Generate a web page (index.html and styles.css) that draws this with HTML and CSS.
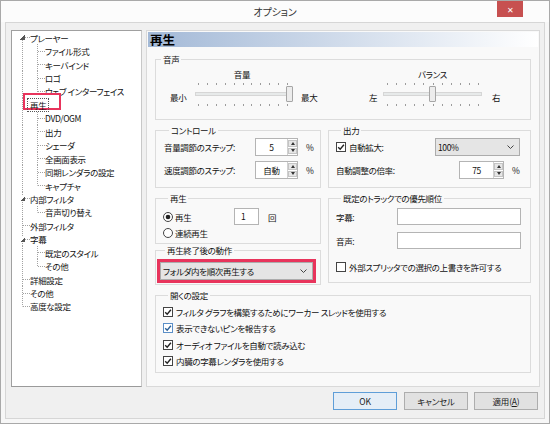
FILE: index.html
```html
<!DOCTYPE html>
<html lang="ja">
<head>
<meta charset="utf-8">
<title>オプション</title>
<link rel="stylesheet" href="styles.css">
</head>
<body>
<div class="window">
  <div class="titlebar">
    <span class="title">オプション</span>
    <span class="close">✕</span>
  </div>
  <div class="client">
    <div class="main">
      <div class="tree">
        <div class="row"><span class="c first exp"><i class="tri"></i></span><span class="txt">プレーヤー</span></div>
        <div class="row"><span class="c p"></span><span class="c tee"></span><span class="txt">ファイル形式</span></div>
        <div class="row"><span class="c p"></span><span class="c tee"></span><span class="txt">キーバインド</span></div>
        <div class="row"><span class="c p"></span><span class="c tee"></span><span class="txt">ロゴ</span></div>
        <div class="row"><span class="c p"></span><span class="c tee"></span><span class="txt">ウェブ インターフェイス</span></div>
        <div class="row selrow"><span class="c p"></span><span class="anno"></span><span class="txt focus">再生</span></div>
        <div class="row"><span class="c p"></span><span class="c tee"></span><span class="txt">DVD/OGM</span></div>
        <div class="row"><span class="c p"></span><span class="c tee"></span><span class="txt">出力</span></div>
        <div class="row"><span class="c p"></span><span class="c tee"></span><span class="txt">シェーダ</span></div>
        <div class="row"><span class="c p"></span><span class="c tee"></span><span class="txt">全画面表示</span></div>
        <div class="row"><span class="c p"></span><span class="c tee"></span><span class="txt">同期レンダラの設定</span></div>
        <div class="row"><span class="c p"></span><span class="c last"></span><span class="txt">キャプチャ</span></div>
        <div class="row"><span class="c tee exp"><i class="tri"></i></span><span class="txt">内部フィルタ</span></div>
        <div class="row"><span class="c p"></span><span class="c last"></span><span class="txt">音声切り替え</span></div>
        <div class="row"><span class="c tee"></span><span class="txt">外部フィルタ</span></div>
        <div class="row"><span class="c tee exp"><i class="tri"></i></span><span class="txt">字幕</span></div>
        <div class="row"><span class="c p"></span><span class="c tee"></span><span class="txt">既定のスタイル</span></div>
        <div class="row"><span class="c p"></span><span class="c last"></span><span class="txt">その他</span></div>
        <div class="row"><span class="c tee"></span><span class="txt">詳細設定</span></div>
        <div class="row"><span class="c tee"></span><span class="txt">その他</span></div>
        <div class="row"><span class="c last"></span><span class="txt">高度な設定</span></div>
      </div>

      <div class="page">
        <div class="caption">再生</div>
        <div class="groups">
          <fieldset class="g audio span2">
            <legend>音声</legend>
            <div class="sliders">
              <div class="slider vol">
                <span class="stitle">音量</span>
                <span class="send">最小</span>
                <div class="track">
                  <i class="ticks"></i><i class="groove"></i><i class="ticks"></i>
                  <i class="thumb" style="left:91px"></i>
                </div>
                <span class="send send-r">最大</span>
              </div>
              <div class="slider bal">
                <span class="stitle">バランス</span>
                <span class="send">左</span>
                <div class="track">
                  <i class="ticks"></i><i class="groove"></i><i class="ticks"></i>
                  <i class="thumb" style="left:46px"></i>
                </div>
                <span class="send send-r">右</span>
              </div>
            </div>
          </fieldset>

          <fieldset class="g ctrl">
            <legend>コントロール</legend>
            <div class="frow first-row">
              <span class="lbl w91">音量調節のステップ:</span>
              <span class="spin w43"><span class="val">5</span><span class="arrows"><i class="up"></i><i class="dn"></i></span></span>
              <span class="unit">%</span>
            </div>
            <div class="frow">
              <span class="lbl w91">速度調節のステップ:</span>
              <span class="spin w43"><span class="val">自動</span><span class="arrows"><i class="up"></i><i class="dn"></i></span></span>
              <span class="unit">%</span>
            </div>
          </fieldset>

          <fieldset class="g out">
            <legend>出力</legend>
            <div class="frow first-row">
              <span class="lbl w99"><svg class="cb" viewBox="0 0 10 10"><rect x="0.5" y="0.5" width="9" height="9" fill="#fff" stroke="#444"/><path d="M2.2 5.2 L4.2 7.2 L7.9 2.8" fill="none" stroke="#222" stroke-width="1.4"/></svg>自動拡大:</span>
              <span class="select w85"><span class="sv">100%</span><svg class="chev" viewBox="0 0 7 4"><path d="M0.5 0.5 L3.5 3.5 L6.5 0.5" fill="none" stroke="#444" stroke-width="1"/></svg></span>
            </div>
            <div class="frow">
              <span class="lbl w123">自動調整の倍率:</span>
              <span class="spin w45"><span class="val">75</span><span class="arrows"><i class="up"></i><i class="dn"></i></span></span>
              <span class="unit">%</span>
            </div>
          </fieldset>

          <div class="leftcol">
            <fieldset class="g play">
              <legend>再生</legend>
              <div class="prow first-prow">
                <span class="lbl w71"><svg class="rb" viewBox="0 0 10 10"><circle cx="5" cy="5" r="4.5" fill="#fff" stroke="#444"/><circle cx="5" cy="5" r="2.3" fill="#222"/></svg>再生</span>
                <span class="input w25">1</span>
                <span class="unit u9">回</span>
              </div>
              <div class="prow second-prow">
                <span class="lbl"><svg class="rb" viewBox="0 0 10 10"><circle cx="5" cy="5" r="4.5" fill="#fff" stroke="#444"/></svg>連続再生</span>
              </div>
            </fieldset>
            <fieldset class="g after">
              <legend>再生終了後の動作</legend>
              <span class="select w153 marked"><span class="sv">フォルダ内を順次再生する</span><svg class="chev" viewBox="0 0 7 4"><path d="M0.5 0.5 L3.5 3.5 L6.5 0.5" fill="none" stroke="#444" stroke-width="1"/></svg></span>
            </fieldset>
          </div>

          <fieldset class="g prio">
            <legend>既定のトラックでの優先順位</legend>
            <div class="frow first-row2">
              <span class="lbl w61">字幕:</span>
              <span class="input w124"></span>
            </div>
            <div class="frow gap7">
              <span class="lbl w61">音声:</span>
              <span class="input w124"></span>
            </div>
            <div class="crow gap12">
              <svg class="cb" viewBox="0 0 10 10"><rect x="0.5" y="0.5" width="9" height="9" fill="#fff" stroke="#444"/></svg>外部スプリッタでの選択の上書きを許可する
            </div>
          </fieldset>

          <fieldset class="g open span2">
            <legend>開くの設定</legend>
            <div class="checks">
              <div class="crow"><svg class="cb" viewBox="0 0 10 10"><rect x="0.5" y="0.5" width="9" height="9" fill="#fff" stroke="#444"/><path d="M2.2 5.2 L4.2 7.2 L7.9 2.8" fill="none" stroke="#222" stroke-width="1.4"/></svg>フィルタ グラフを構築するためにワーカー スレッドを使用する</div>
              <div class="crow"><svg class="cb" viewBox="0 0 10 10"><rect x="0.5" y="0.5" width="9" height="9" fill="#fff" stroke="#5b8fc7"/><path d="M2.2 5.2 L4.2 7.2 L7.9 2.8" fill="none" stroke="#2b5f95" stroke-width="1.4"/></svg>表示できないピンを報告する</div>
              <div class="crow"><svg class="cb" viewBox="0 0 10 10"><rect x="0.5" y="0.5" width="9" height="9" fill="#fff" stroke="#444"/><path d="M2.2 5.2 L4.2 7.2 L7.9 2.8" fill="none" stroke="#222" stroke-width="1.4"/></svg>オーディオ ファイルを自動で読み込む</div>
              <div class="crow"><svg class="cb" viewBox="0 0 10 10"><rect x="0.5" y="0.5" width="9" height="9" fill="#fff" stroke="#444"/><path d="M2.2 5.2 L4.2 7.2 L7.9 2.8" fill="none" stroke="#222" stroke-width="1.4"/></svg>内臓の字幕レンダラを使用する</div>
            </div>
          </fieldset>
        </div>
      </div>
    </div>
    <div class="buttons">
      <button class="btn default">OK</button>
      <button class="btn">キャンセル</button>
      <button class="btn">適用(<u>A</u>)</button>
    </div>
  </div>
</div>
</body>
</html>
```

FILE: styles.css
```css
* { box-sizing: border-box; }
body {
  margin: 0;
  font-family: "Noto Sans CJK JP", "Noto Sans", sans-serif;
  font-size: 8.5px;
  letter-spacing: -0.35px;
  font-feature-settings: "palt";
  color: #111;
  background: #fff;
}
.window {
  width: 550px;
  height: 424px;
  border: 1px solid #a9a9a9;
  background: #f7f7f7;
  display: flex;
  flex-direction: column;
}
.titlebar {
  height: 21px;
  position: relative;
  display: flex;
  align-items: center;
  justify-content: center;
  background: #fcfcfc;
}
.title { font-size: 10px; color: #333; line-height: 12px; letter-spacing: -0.2px; }
.close {
  position: absolute;
  top: 0;
  right: 26px;
  width: 26px;
  height: 16px;
  background: #c75050;
  color: #fff;
  font-size: 8px;
  display: flex;
  align-items: center;
  justify-content: center;
}
.client {
  flex: 1;
  margin: 0 4px 4px;
  border: 1px solid #d6d6d6;
  background: #f0f0f0;
  padding: 7px 4px 7px 5px;
  display: flex;
  flex-direction: column;
}
.main { display: flex; gap: 4px; height: 357px; }

/* tree */
.tree {
  width: 131px;
  height: 357px;
  border: 1px solid #a0a0a0;
  border-right-color: #c8c8c8;
  border-bottom-color: #9a9a9a;
  background: #fff;
  padding-left: 3px;
}
.row { display: flex; height: 13.45px; align-items: center; white-space: nowrap; }
.txt { line-height: 12px; position: relative; }
.c {
  width: 15px;
  height: 100%;
  flex: none;
  --dot-v: repeating-linear-gradient(to bottom, #a3a3a3 0 1px, transparent 1px 2px);
  --dot-h: repeating-linear-gradient(to right, #a3a3a3 0 1px, transparent 1px 2px);
  background-repeat: no-repeat;
}
.c.p { background-image: var(--dot-v); background-size: 1px 100%; background-position: 7px 0; }
.c.tee {
  background-image: var(--dot-v), var(--dot-h);
  background-size: 1px 100%, 7px 1px;
  background-position: 7px 0, 8px 50%;
}
.c.last {
  background-image: var(--dot-v), var(--dot-h);
  background-size: 1px 50%, 7px 1px;
  background-position: 7px 0, 8px 50%;
}
.c.first {
  background-image: var(--dot-v), var(--dot-h);
  background-size: 1px 50%, 7px 1px;
  background-position: 7px 100%, 8px 50%;
}
.c.exp { display: flex; align-items: center; padding-left: 5px; }
.tri {
  width: 5px;
  height: 5px;
  background: linear-gradient(135deg, #fff 50%, #555 50%);
}
.selrow { position: relative; }
.anno {
  position: absolute;
  left: 8px;
  top: -5px;
  width: 38px;
  height: 17px;
  border: 2.5px solid #e8345c;
  background: #fff;
}
.focus {
  margin-left: -3px;
  padding: 0 2px;
  border: 1px dotted #555;
  z-index: 1;
}

/* page */
.page {
  width: 394px;
  height: 357px;
  border: 1px solid #d9d9d9;
  background: #f9f9f9;
}
.caption {
  margin: 1px 1px 0;
  height: 15px;
  background: linear-gradient(to right, #a3b9d7, #ffffff);
  font-size: 12.5px;
  font-weight: bold;
  line-height: 15px;
  padding-left: 2px;
  letter-spacing: 0;
  color: #000;
}
.groups {
  display: grid;
  grid-template-columns: 166px 203px;
  column-gap: 7px;
  row-gap: 4px;
  padding: 6px 8px 0;
  align-items: start;
}
.span2 { grid-column: 1 / 3; }
.g {
  margin: 0;
  padding: 0;
  border: 1px solid #dcdcdc;
  min-width: 0;
}
legend {
  padding: 0 2px;
  margin-left: 5px;
  line-height: 12px;
  height: 12px;
  white-space: nowrap;
}

/* audio sliders */
.audio { padding-bottom: 11px; }
.sliders { display: flex; margin-top: 3px; padding-left: 14px; }
.slider { display: grid; grid-template-rows: 12px 28px; white-space: nowrap; }
.vol { grid-template-columns: 25px 94px 29px; }
.bal { grid-template-columns: 14px 99px 19px; margin-left: 51px; }
.stitle { grid-column: 2; grid-row: 1; text-align: center; line-height: 12px; }
.send { grid-row: 2; align-self: start; margin-top: 11px; line-height: 12px; }
.vol .send-r { padding-left: 12px; }
.bal .send-r { padding-left: 10px; }
.track { grid-row: 2; grid-column: 2; position: relative; }
.track i { display: block; }
.ticks {
  height: 2px;
  margin-top: 3px;
  margin-left: 3px;
  width: 90px;
  background: repeating-linear-gradient(to right, #9c9c9c 0 1px, transparent 1px 8.9px);
}
.bal .ticks { margin-left: 4px; width: 92px; background: repeating-linear-gradient(to right, #9c9c9c 0 1px, transparent 1px 9.1px); }
.groove {
  height: 4px;
  margin-top: 7px;
  background: #e7eaea;
  border: 1px solid #d6d6d6;
}
.groove + .ticks { margin-top: 8px; }
.thumb {
  position: absolute;
  top: 6px;
  width: 7px;
  height: 16px;
  background: #ececec;
  border: 1px solid #a6a6a6;
  border-radius: 1px;
}

/* form rows */
.frow { display: flex; align-items: center; height: 18px; }
.ctrl { padding: 0 8px 8px; }
.out { padding: 0 7px 8px; }
.first-row { margin-top: 2px; }
.frow + .frow { margin-top: 5px; }
.lbl { display: flex; align-items: center; white-space: nowrap; flex: none; line-height: 12px; }
.w91 { width: 91px; }
.w99 { width: 99px; }
.w123 { width: 123px; }
.w71 { width: 71px; }
.w61 { width: 61px; }
.spin {
  display: flex;
  height: 18px;
  background: #fff;
  border: 1px solid #b4b4b4;
  flex: none;
}
.w43 { width: 43px; }
.w45 { width: 45px; }
.spin .val { flex: 1; text-align: center; line-height: 16px; }
.arrows {
  width: 10px;
  display: flex;
  flex-direction: column;
  gap: 1px;
  padding: 1px 0;
  border-left: 1px solid #d0d0d0;
}
.arrows i {
  flex: 1;
  background: #e6e6e6;
  border: 1px solid #c4c4c4;
  display: flex;
  align-items: center;
  justify-content: center;
}
.arrows i::before {
  content: "";
  border-left: 2.5px solid transparent;
  border-right: 2.5px solid transparent;
}
.arrows .up::before { border-bottom: 3px solid #333; }
.arrows .dn::before { border-top: 3px solid #333; }
.unit { margin-left: 8px; line-height: 12px; }
.u9 { margin-left: 9px; }
.cb { width: 10px; height: 10px; flex: none; margin-right: 3px; }
.rb { width: 10px; height: 10px; flex: none; margin-right: 2px; }
.select {
  display: flex;
  align-items: center;
  height: 18px;
  background: #e5e5e5;
  border: 1px solid #acacac;
  padding: 0 5px 0 2px;
  flex: none;
}
.w85 { width: 85px; }
.w153 { width: 153px; }
.sv { flex: 1; line-height: 12px; white-space: nowrap; }
.chev { width: 7px; height: 4px; }
.input {
  display: block;
  height: 17px;
  background: #fff;
  border: 1px solid #b4b4b4;
  line-height: 15px;
  padding-left: 6px;
  flex: none;
}
.w25 { width: 25px; }
.w124 { width: 124px; }

.leftcol { display: flex; flex-direction: column; }
.play { padding: 0 7px 2px; }
.prow { display: flex; align-items: center; }
.first-prow { margin-top: 4px; height: 17px; }
.second-prow { height: 16px; }
.after { padding: 0 4px 4px; }
.after .select { margin-top: 6px; }
.marked { outline: 3px solid #e8345c; outline-offset: 0; }

.prio { padding: 0 7px 9px; }
.first-row2 { margin-top: 4px; height: 17px; }
.prio .frow + .frow { margin-top: 7px; height: 17px; }
.crow { display: flex; align-items: center; height: 12px; white-space: nowrap; line-height: 12px; }
.gap12 { margin-top: 12px; }

.open { padding: 0 7px 3px; }
.checks { margin-top: 3px; }
.checks .crow { height: 16.3px; }

/* buttons */
.buttons {
  margin-top: 5px;
  height: 18px;
  display: flex;
  justify-content: flex-end;
  gap: 6px;
  padding-right: 2px;
}
.btn {
  width: 64px;
  height: 18px;
  padding: 0;
  font: inherit;
  font-size: 8.5px;
  letter-spacing: -0.2px;
  font-feature-settings: "palt";
  color: #1a1a1a;
  background: #e1e1e1;
  border: 1px solid #adadad;
}
.btn.default { border-color: #5f9ed8; background: #e5eef7; margin-right: 1px; }
```
